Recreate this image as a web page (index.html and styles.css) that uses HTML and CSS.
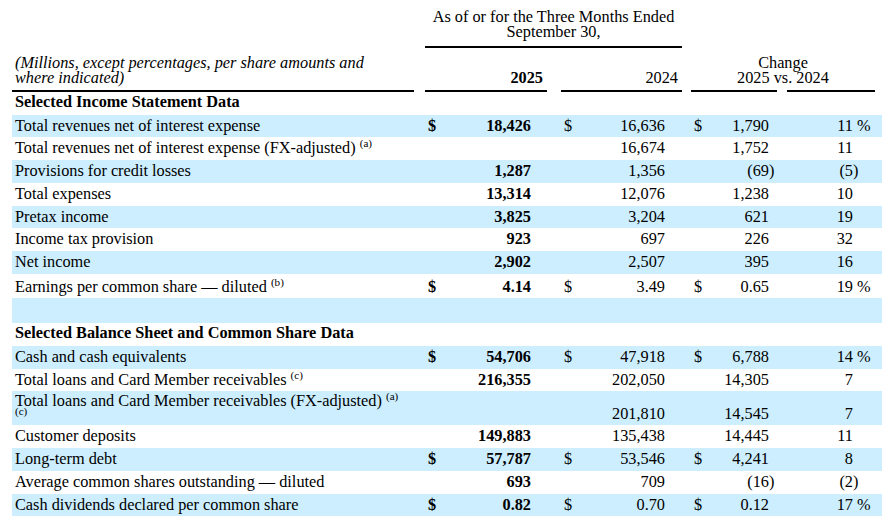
FILE: index.html
```html
<!DOCTYPE html>
<html lang="en">
<head>
<meta charset="utf-8">
<title>Selected Financial Data</title>
<link rel="stylesheet" href="styles.css">
</head>
<body>
<div class="page">
<table class="fin">
  <colgroup>
    <col class="c-lbl"><col class="c-g1">
    <col class="c-d"><col class="c-v1"><col class="c-s1"><col class="c-g2">
    <col class="c-d"><col class="c-v2"><col class="c-s2"><col class="c-g3">
    <col class="c-d"><col class="c-v3"><col class="c-s3"><col class="c-g4">
    <col class="c-v4"><col class="c-s4"><col class="c-tail">
  </colgroup>
  <tbody>
    <tr class="hd hd1">
      <td colspan="2"></td>
      <td colspan="7" class="ctr rule">As of or for the Three Months Ended<br>September 30,</td>
      <td colspan="8"></td>
    </tr>
    <tr class="hd hd2">
      <td class="lbl ital rule">(Millions, except percentages, per share amounts and where indicated)</td>
      <td></td>
      <td colspan="3" class="num rule b">2025</td>
      <td></td>
      <td colspan="3" class="num rule">2024</td>
      <td></td>
      <td colspan="6" class="ctr chg">Change<br>2025 vs. 2024</td>
      <td></td>
    </tr>
    <tr class="sec">
      <td class="lbl b" colspan="17">Selected Income Statement Data</td>
    </tr>
    <tr class="shade">
      <td class="lbl">Total revenues net of interest expense</td><td></td>
      <td class="dol b">$</td><td class="num b">18,426</td><td></td><td></td>
      <td class="dol">$</td><td class="num">16,636</td><td></td><td></td>
      <td class="dol">$</td><td class="num">1,790</td><td></td><td></td>
      <td class="num">11</td><td class="suf">&nbsp;%</td><td></td>
    </tr>
    <tr>
      <td class="lbl">Total revenues net of interest expense (FX-adjusted) <sup>(a)</sup></td><td></td>
      <td></td><td class="num b"></td><td></td><td></td>
      <td></td><td class="num">16,674</td><td></td><td></td>
      <td></td><td class="num">1,752</td><td></td><td></td>
      <td class="num">11</td><td></td><td></td>
    </tr>
    <tr class="shade">
      <td class="lbl">Provisions for credit losses</td><td></td>
      <td></td><td class="num b">1,287</td><td></td><td></td>
      <td></td><td class="num">1,356</td><td></td><td></td>
      <td></td><td class="num">(69</td><td class="suf">)</td><td></td>
      <td class="num">(5</td><td class="suf">)</td><td></td>
    </tr>
    <tr>
      <td class="lbl">Total expenses</td><td></td>
      <td></td><td class="num b">13,314</td><td></td><td></td>
      <td></td><td class="num">12,076</td><td></td><td></td>
      <td></td><td class="num">1,238</td><td></td><td></td>
      <td class="num">10</td><td></td><td></td>
    </tr>
    <tr class="shade">
      <td class="lbl">Pretax income</td><td></td>
      <td></td><td class="num b">3,825</td><td></td><td></td>
      <td></td><td class="num">3,204</td><td></td><td></td>
      <td></td><td class="num">621</td><td></td><td></td>
      <td class="num">19</td><td></td><td></td>
    </tr>
    <tr>
      <td class="lbl">Income tax provision</td><td></td>
      <td></td><td class="num b">923</td><td></td><td></td>
      <td></td><td class="num">697</td><td></td><td></td>
      <td></td><td class="num">226</td><td></td><td></td>
      <td class="num">32</td><td></td><td></td>
    </tr>
    <tr class="shade">
      <td class="lbl">Net income</td><td></td>
      <td></td><td class="num b">2,902</td><td></td><td></td>
      <td></td><td class="num">2,507</td><td></td><td></td>
      <td></td><td class="num">395</td><td></td><td></td>
      <td class="num">16</td><td></td><td></td>
    </tr>
    <tr class="eps">
      <td class="lbl">Earnings per common share — diluted <sup>(b)</sup></td><td></td>
      <td class="dol b">$</td><td class="num b">4.14</td><td></td><td></td>
      <td class="dol">$</td><td class="num">3.49</td><td></td><td></td>
      <td class="dol">$</td><td class="num">0.65</td><td></td><td></td>
      <td class="num">19</td><td class="suf">&nbsp;%</td><td></td>
    </tr>
    <tr class="shade blank">
      <td colspan="17">&nbsp;</td>
    </tr>
    <tr class="sec">
      <td class="lbl b" colspan="17">Selected Balance Sheet and Common Share Data</td>
    </tr>
    <tr class="shade">
      <td class="lbl">Cash and cash equivalents</td><td></td>
      <td class="dol b">$</td><td class="num b">54,706</td><td></td><td></td>
      <td class="dol">$</td><td class="num">47,918</td><td></td><td></td>
      <td class="dol">$</td><td class="num">6,788</td><td></td><td></td>
      <td class="num">14</td><td class="suf">&nbsp;%</td><td></td>
    </tr>
    <tr>
      <td class="lbl">Total loans and Card Member receivables <sup>(c)</sup></td><td></td>
      <td></td><td class="num b">216,355</td><td></td><td></td>
      <td></td><td class="num">202,050</td><td></td><td></td>
      <td></td><td class="num">14,305</td><td></td><td></td>
      <td class="num">7</td><td></td><td></td>
    </tr>
    <tr class="shade tall">
      <td class="lbl wrap">Total loans and Card Member receivables (FX-adjusted) <sup>(a)</sup><br><sup>(c)</sup></td><td></td>
      <td></td><td class="num b"></td><td></td><td></td>
      <td></td><td class="num">201,810</td><td></td><td></td>
      <td></td><td class="num">14,545</td><td></td><td></td>
      <td class="num">7</td><td></td><td></td>
    </tr>
    <tr>
      <td class="lbl">Customer deposits</td><td></td>
      <td></td><td class="num b">149,883</td><td></td><td></td>
      <td></td><td class="num">135,438</td><td></td><td></td>
      <td></td><td class="num">14,445</td><td></td><td></td>
      <td class="num">11</td><td></td><td></td>
    </tr>
    <tr class="shade">
      <td class="lbl">Long-term debt</td><td></td>
      <td class="dol b">$</td><td class="num b">57,787</td><td></td><td></td>
      <td class="dol">$</td><td class="num">53,546</td><td></td><td></td>
      <td class="dol">$</td><td class="num">4,241</td><td></td><td></td>
      <td class="num">8</td><td></td><td></td>
    </tr>
    <tr>
      <td class="lbl">Average common shares outstanding — diluted</td><td></td>
      <td></td><td class="num b">693</td><td></td><td></td>
      <td></td><td class="num">709</td><td></td><td></td>
      <td></td><td class="num">(16</td><td class="suf">)</td><td></td>
      <td class="num">(2</td><td class="suf">)</td><td></td>
    </tr>
    <tr class="shade">
      <td class="lbl">Cash dividends declared per common share</td><td></td>
      <td class="dol b">$</td><td class="num b">0.82</td><td></td><td></td>
      <td class="dol">$</td><td class="num">0.70</td><td></td><td></td>
      <td class="dol">$</td><td class="num">0.12</td><td></td><td></td>
      <td class="num">17</td><td class="suf">&nbsp;%</td><td></td>
    </tr>
  </tbody>
</table>
</div>
</body>
</html>
```
FILE: styles.css
```css
html, body {
  margin: 0;
  padding: 0;
  background: #ffffff;
  color: #000000;
  font-family: "Liberation Serif", "Times New Roman", serif;
  font-size: 16.3px;
}

.page {
  padding: 0 12px;
}

.fin {
  width: 870px;
  table-layout: fixed;
  border-collapse: separate;
  border-spacing: 0;
}

.c-lbl { width: 402px; }
.c-g1 { width: 11px; }
.c-d { width: 20px; }
.c-v1 { width: 86px; }
.c-s1 { width: 16px; }
.c-g2 { width: 14px; }
.c-v2 { width: 84px; }
.c-s2 { width: 17px; }
.c-g3 { width: 9px; }
.c-v3 { width: 58px; }
.c-s3 { width: 8px; }
.c-g4 { width: 10px; }
.c-v4 { width: 66px; }
.c-s4 { width: 22px; }
.c-tail { width: 7px; }

.fin td {
  padding: 2px 0;
  line-height: 18.7px;
  vertical-align: bottom;
  white-space: nowrap;
}

.fin .lbl {
  padding-left: 3px;
  text-align: left;
}

.fin .num {
  text-align: right;
}

.fin .dol {
  padding-left: 3px;
  text-align: left;
}

.fin .suf {
  text-align: left;
}

.b {
  font-weight: bold;
}

.ital {
  font-style: italic;
}

.ctr {
  text-align: center;
}

.shade {
  background: #cceeff;
}

/* header rows */
.hd td {
  line-height: 15px;
}

.hd1 td {
  padding: 9px 0 7px;
}

.hd2 td {
  padding: 7px 0 5px;
}

.hd2 td.lbl {
  padding-left: 3px;
  padding-right: 40px;
  white-space: normal;
}

.hd2 td.num {
  padding-right: 4px;
}

.fin td.rule {
  border-bottom: 2px solid #000;
}

.fin td.chg {
  padding-bottom: 7px;
  background:
    linear-gradient(#000, #000) left bottom / 86px 2px no-repeat,
    linear-gradient(#000, #000) right bottom / 88px 2px no-repeat;
}

.sec td {
  padding-top: 1px;
  padding-bottom: 3px;
}

.eps td {
  padding-top: 4px;
}

.blank td {
  padding-top: 3px;
  padding-bottom: 3.3px;
}

.tall td.wrap {
  line-height: 15px;
}

sup {
  font-size: 0.68em;
  line-height: 0;
  vertical-align: super;
}
```
